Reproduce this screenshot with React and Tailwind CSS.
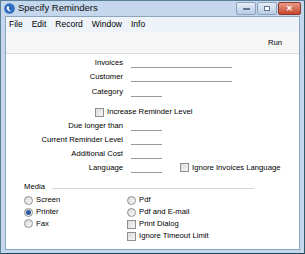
import React from 'react';

const font = { fontFamily: '"Liberation Sans", Arial, sans-serif' };

const Field = ({ label, width }) => (
   <div className="flex items-center h-[14px]">
      <div className="w-[117px] text-right pr-0 leading-none">{label}</div>
      <div className={`ml-[8px] h-[10px] border-b border-[#9a9a9a] ${width}`} />
   </div>
);

const Check = () => (
   <span className="inline-block w-[9px] h-[9px] border border-[#8f8f8f] bg-gradient-to-br from-[#dcdcdc] to-[#f6f6f6] shrink-0" />
);

const Radio = ({ on }) => (
   <span className="inline-flex items-center justify-center w-[9px] h-[9px] rounded-full border border-[#8e8f8f] bg-gradient-to-br from-[#d8d8d8] to-[#fbfbfb] shrink-0">
      {on && <span className="w-[5px] h-[5px] rounded-full bg-[#2a5aa0]" />}
   </span>
);

export default function App() {
   return (
      <div style={font} className="w-[305px] h-[254px] bg-[#c5d7ec] border border-[#5b7f96] border-r-[#2f5a6a] border-b-[#1f4a5a] flex flex-col text-[7.7px] text-black overflow-hidden">
         {/* title bar */}
         <div className="h-[15px] flex items-center pl-[3px] pr-[3px] shrink-0">
            <svg width="11" height="11" viewBox="0 0 11 11">
               <circle cx="5.5" cy="5.5" r="5.3" fill="#2e6cc0" />
               <path d="M3 3.5 C2 6 4 8.8 7.8 8.3 C5.5 8 4.2 6.2 5 3.6 Z" fill="#fff" />
            </svg>
            <span className="ml-[3px] text-[9.5px] text-[#111]">Specify Reminders</span>
            <div className="ml-auto flex items-start h-full gap-[1px]">
               <div className="w-[20px] h-[13px] mt-[1px] rounded-[2px] border border-[#8aa2bd] bg-gradient-to-b from-[#e6eef8] to-[#b8cbe2] flex items-center justify-center">
                  <span className="w-[7px] h-[2px] bg-white border border-[#5f7590]" />
               </div>
               <div className="w-[20px] h-[13px] mt-[1px] rounded-[2px] border border-[#8aa2bd] bg-gradient-to-b from-[#e6eef8] to-[#b8cbe2] flex items-center justify-center">
                  <span className="w-[6px] h-[5px] bg-white border border-[#5f7590]" />
               </div>
               <div className="w-[23px] h-[13px] mt-[1px] rounded-[2px] border border-[#8a3a2c] bg-gradient-to-b from-[#e99a86] to-[#c5432a] flex items-center justify-center text-white text-[8px] font-bold leading-none">
                  ✕
               </div>
            </div>
         </div>

         <div className="flex-1 flex flex-col mx-[4px] mb-[3px] border border-[#8da4bd]">
            {/* menu */}
            <div className="h-[15px] bg-[#eef3fa] flex items-center gap-[9px] pl-[3px] text-[8.5px] shrink-0">
               <span>File</span>
               <span>Edit</span>
               <span>Record</span>
               <span>Window</span>
               <span>Info</span>
            </div>
            {/* toolbar */}
            <div className="h-[22px] bg-[#f6f6f6] border-b border-[#dedede] flex items-center justify-end pr-[17px] shrink-0">
               <span>Run</span>
            </div>

            {/* content */}
            <div className="flex-1 bg-white flex flex-col pt-[2px]">
               <Field label="Invoices" width="w-[101px]" />
               <Field label="Customer" width="w-[101px]" />
               <div className="mt-[1px]">
                  <Field label="Category" width="w-[31px]" />
               </div>
               <div className="h-[14px] mt-[6px] flex items-center pl-[89px] gap-[3px]">
                  <Check />
                  <span>Increase Reminder Level</span>
               </div>
               <Field label="Due longer than" width="w-[31px]" />
               <Field label="Current Reminder Level" width="w-[31px]" />
               <Field label="Additional Cost" width="w-[31px]" />
               <div className="flex items-center">
                  <Field label="Language" width="w-[31px]" />
                  <div className="ml-[18px] flex items-center gap-[3px]">
                     <Check />
                     <span>Ignore Invoices Language</span>
                  </div>
               </div>

               <div className="mt-[5px] ml-[18px] mr-[45px] flex items-center h-[14px]">
                  <span>Media</span>
                  <div className="flex-1 ml-[7px] border-t border-[#d5d5d5] mt-[2px]" />
               </div>

               <div className="flex ml-[18px]">
                  <div className="flex flex-col w-[103px]">
                     <div className="h-[12px] flex items-center gap-[3px]"><Radio /><span>Screen</span></div>
                     <div className="h-[12px] flex items-center gap-[3px]"><Radio on /><span>Printer</span></div>
                     <div className="h-[11px] flex items-center gap-[3px]"><Radio /><span>Fax</span></div>
                  </div>
                  <div className="flex flex-col">
                     <div className="h-[12px] flex items-center gap-[3px]"><Radio /><span>Pdf</span></div>
                     <div className="h-[12px] flex items-center gap-[3px]"><Radio /><span>Pdf and E-mail</span></div>
                     <div className="h-[12px] flex items-center gap-[3px]"><Check /><span>Print Dialog</span></div>
                     <div className="h-[12px] flex items-center gap-[3px]"><Check /><span>Ignore Timeout Limit</span></div>
                  </div>
               </div>
            </div>
         </div>
      </div>
   );
}
